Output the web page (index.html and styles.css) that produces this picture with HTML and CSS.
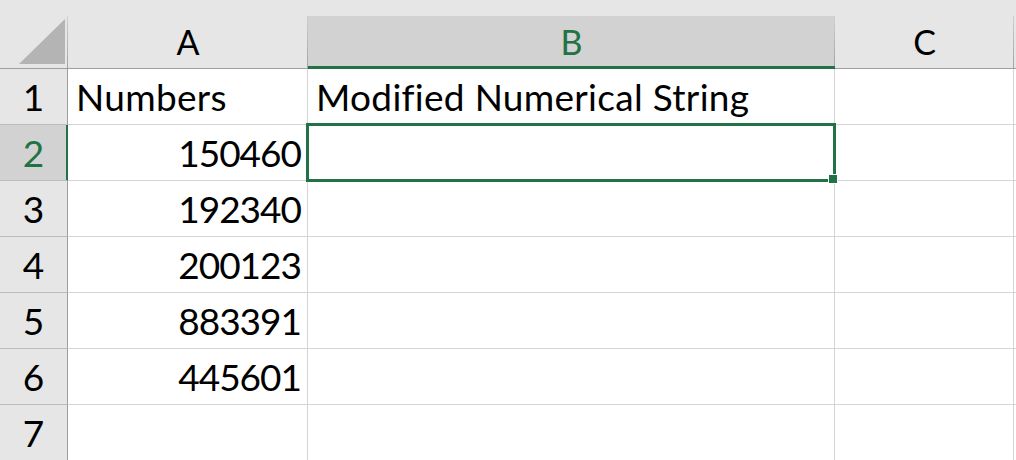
FILE: index.html
```html
<!DOCTYPE html>
<html lang="en">
<head>
    <meta charset="UTF-8">
    <title>Sheet1</title>
    <link rel="stylesheet" href="styles.css">
</head>
<body>
    <div class="sheet">
        <!-- column headers -->
        <div class="col-head corner">
            <svg class="select-all" width="46" height="45" viewBox="0 0 46 45"><polygon points="46,0 46,45 0,45" fill="#b4b4b4"/></svg>
        </div>
        <div class="col-head">A</div>
        <div class="col-head active">B</div>
        <div class="col-head">C</div>
        <div class="col-head"></div>

        <div class="row-head">1</div>
        <div class="cell">Numbers</div>
        <div class="cell">Modified Numerical String</div>
        <div class="cell"></div>
        <div class="cell"></div>

        <div class="row-head active">2</div>
        <div class="cell num">150460</div>
        <div class="cell selected">
            <div class="selection"><span class="fill-handle"></span></div>
        </div>
        <div class="cell"></div>
        <div class="cell"></div>

        <div class="row-head">3</div>
        <div class="cell num">192340</div>
        <div class="cell"></div>
        <div class="cell"></div>
        <div class="cell"></div>

        <div class="row-head">4</div>
        <div class="cell num">200123</div>
        <div class="cell"></div>
        <div class="cell"></div>
        <div class="cell"></div>

        <div class="row-head">5</div>
        <div class="cell num">883391</div>
        <div class="cell"></div>
        <div class="cell"></div>
        <div class="cell"></div>

        <div class="row-head">6</div>
        <div class="cell num">445601</div>
        <div class="cell"></div>
        <div class="cell"></div>
        <div class="cell"></div>

        <div class="row-head">7</div>
        <div class="cell"></div>
        <div class="cell"></div>
        <div class="cell"></div>
        <div class="cell"></div>
    </div>
</body>
</html>
```

FILE: styles.css
```css
body {
    margin: 0;
    padding: 0;
    height: 100vh;
    overflow: hidden;
    background-color: #fff;
    font-family: "Lato", "Liberation Sans", sans-serif;
    font-variant-ligatures: none;
}

.sheet {
    display: grid;
    grid-template-columns: 68px 240px 527px 179px 1fr;
    grid-template-rows: 69px repeat(7, 56px);
    background-color: #fff;
}

.sheet > div {
    box-sizing: border-box;
}

/* column header strip */
.col-head {
    margin-top: 16px;
    height: 53px;
    display: flex;
    align-items: center;
    justify-content: center;
    line-height: 52px;
    font-size: 34px;
    color: #000;
    border-bottom: 1px solid #9e9e9e;
    background: linear-gradient(#cfcfcf, #a2a2a2) right / 1px 100% no-repeat, #e6e6e6;
    box-shadow: 0 -16px 0 #e6e6e6;
}

.col-head.corner {
    align-items: flex-end;
    justify-content: flex-end;
    padding: 0 3px 4px 0;
}

.select-all {
    display: block;
}

.col-head.active {
    background-color: #d2d2d2;
    color: #217346;
    border-bottom-color: #217346;
    box-shadow: 0 -16px 0 #e6e6e6, inset 0 -2px 0 #217346;
}

/* row number column */
.row-head {
    display: flex;
    align-items: flex-end;
    justify-content: center;
    padding-bottom: 9px;
    font-size: 37px;
    line-height: 1;
    color: #000;
    background-color: #e6e6e6;
    border-right: 1px solid #9e9e9e;
    border-bottom: 1px solid #bcbcbc;
}

.row-head.active {
    background-color: #d2d2d2;
    color: #217346;
    border-right-color: #217346;
    box-shadow: inset -1px 0 0 #217346;
}

.cell {
    display: flex;
    align-items: flex-end;
    padding: 0 7px 9px 8px;
    font-size: 37px;
    line-height: 1;
    letter-spacing: 0.3px;
    color: #000;
    white-space: nowrap;
    border-right: 1px solid #d4d4d4;
    border-bottom: 1px solid #d4d4d4;
}

.cell.num {
    justify-content: flex-end;
    letter-spacing: -1px;
    padding-right: 6px;
}

.cell.selected {
    position: relative;
}

.selection {
    position: absolute;
    top: -2px;
    left: -2px;
    right: -2px;
    bottom: -2px;
    border: 3px solid #217346;
}

.fill-handle {
    position: absolute;
    right: -5px;
    bottom: -5px;
    width: 8px;
    height: 8px;
    background-color: #217346;
    border: 1px solid #fff;
}
```
